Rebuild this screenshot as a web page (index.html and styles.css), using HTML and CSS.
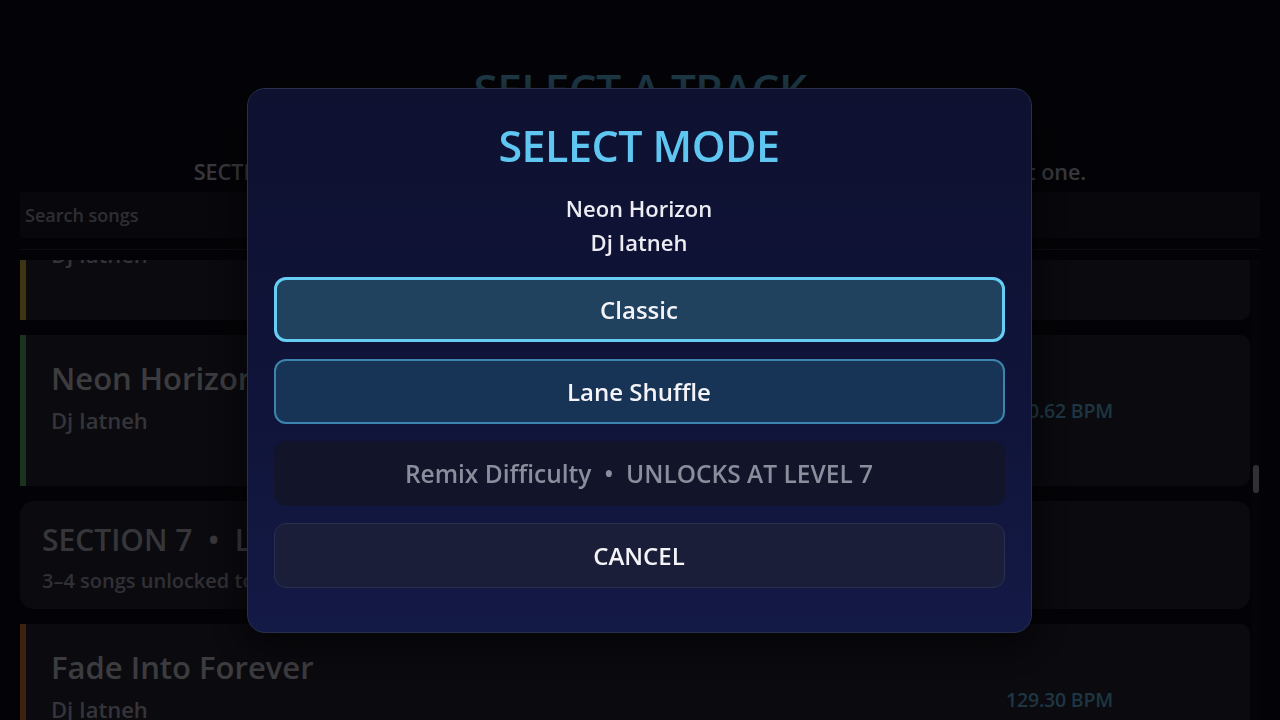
FILE: index.html
```html
<!DOCTYPE html>
<html lang="en">
<head>
    <meta charset="UTF-8">
    <meta name="viewport" content="width=device-width, initial-scale=1.0">
    <title>Select a Track</title>
    <link rel="stylesheet" href="styles.css">
</head>
<body>
    <div class="screen">
        <h1 class="page-title">SELECT A TRACK</h1>
        <p class="page-sub">SECTION 7 &bull; Clear every song in Section 6 with at least a B rank to unlock the next one.</p>

        <div class="search">
            <input type="text" placeholder="Search songs">
        </div>
        <div class="divider"></div>

        <div class="track-list">
            <div class="track stripe-yellow first">
                <div class="track-info">
                    <div class="track-title">Midnight Runner</div>
                    <div class="track-artist">Dj Iatneh</div>
                </div>
                <div class="track-bpm">124.00 BPM</div>
            </div>

            <div class="track stripe-green">
                <div class="track-info">
                    <div class="track-title">Neon Horizon</div>
                    <div class="track-artist">Dj Iatneh</div>
                </div>
                <div class="track-bpm">130.62 BPM</div>
            </div>

            <div class="section-card">
                <div class="section-title">SECTION 7 &nbsp;&bull;&nbsp; LEVEL 7</div>
                <div class="section-sub">3–4 songs unlocked to play in this section</div>
            </div>

            <div class="track stripe-orange">
                <div class="track-info">
                    <div class="track-title">Fade Into Forever</div>
                    <div class="track-artist">Dj Iatneh</div>
                </div>
                <div class="track-bpm">129.30 BPM</div>
            </div>

            <div class="scrollbar"><div class="thumb"></div></div>
        </div>
    </div>

    <div class="backdrop">
        <div class="modal">
            <h2 class="modal-title">SELECT MODE</h2>
            <div class="modal-song">Neon Horizon</div>
            <div class="modal-artist">Dj Iatneh</div>

            <div class="mode-list">
                <button class="mode-btn selected">Classic</button>
                <button class="mode-btn">Lane Shuffle</button>
                <button class="mode-btn locked" disabled>Remix Difficulty &nbsp;&bull;&nbsp; UNLOCKS AT LEVEL 7</button>
                <button class="mode-btn cancel">CANCEL</button>
            </div>
        </div>
    </div>
</body>
</html>
```

FILE: styles.css
```css
* { box-sizing: border-box; }

html, body {
    margin: 0;
    height: 100%;
    overflow: hidden;
}
body {
    font-family: "Open Sans", "Noto Sans", sans-serif;
    font-weight: 600;
    background-color: #0d0d1a;
    color: #d0d0dc;
}

.screen {
    padding: 0 20px;
    height: 100%;
    display: flex;
    flex-direction: column;
}

.page-title {
    margin: 63px 0 0;
    font-size: 44px;
    line-height: 53px;
    font-weight: 600;
    text-align: center;
    color: #64c4ee;
    letter-spacing: -0.5px;
}
.page-sub {
    margin: 41px 0 6px;
    font-size: 21.5px;
    line-height: 29px;
    text-align: center;
    color: #b8b8c8;
}

.search {
    flex-shrink: 0;
    height: 46px;
    background-color: #1a1a28;
    border-radius: 4px;
}
.search input {
    width: 100%;
    height: 100%;
    border: none;
    background: transparent;
    padding: 0 5px;
    font-family: inherit;
    font-weight: 600;
    font-size: 18px;
    color: #fff;
}
.search input::placeholder { color: #9a9aae; }

.divider {
    flex-shrink: 0;
    height: 1px;
    margin-top: 11px;
    background-color: #2a2a3e;
}

.track-list {
    position: relative;
    flex: 1;
    margin-top: 10px;
    overflow: hidden;
    padding-right: 10px;
    display: flex;
    flex-direction: column;
    gap: 15px;
}

.track {
    flex-shrink: 0;
    height: 151px;
    display: flex;
    align-items: flex-start;
    background-color: #222232;
    border-left: 6px solid;
    border-radius: 0 10px 10px 0;
    padding: 23px 137px 23px 25px;
}
.track.first { margin-top: -91px; }
.stripe-yellow { border-left-color: #c8ae3c; }
.stripe-green { border-left-color: #5aa864; }
.stripe-orange { border-left-color: #c87232; }

.track-info { flex: 1; }
.track-title {
    font-size: 31px;
    line-height: 40px;
    color: #c8c8d4;
}
.track-artist {
    margin-top: 7px;
    font-size: 22px;
    line-height: 30px;
    color: #aeaebe;
}
.track-bpm {
    align-self: center;
    font-size: 19.5px;
    letter-spacing: -0.2px;
    color: #64b4dc;
}

.section-card {
    flex-shrink: 0;
    height: 108px;
    background-color: #222232;
    border-radius: 14px;
    padding: 19px 22px 0;
}
.section-title {
    font-size: 30px;
    line-height: 40px;
    color: #b4b4c4;
}
.section-sub {
    margin-top: 7px;
    font-size: 20px;
    line-height: 28px;
    color: #a0a0b2;
}

.scrollbar {
    position: absolute;
    top: 0;
    right: 0;
    width: 8px;
    height: 100%;
    background-color: #121220;
}
.thumb {
    position: absolute;
    top: 205px;
    left: 1px;
    width: 6px;
    height: 28px;
    border-radius: 3px;
    background-color: #a4a4b0;
}

/* modal */
.backdrop {
    position: fixed;
    inset: 0;
    background-color: rgba(0, 0, 0, 0.7);
    display: flex;
    align-items: center;
    justify-content: center;
}
.modal {
    width: 785px;
    margin-right: 2px;
    padding: 32px 26px 44px;
    border-radius: 18px;
    border: 1px solid #2a2f4c;
    background: linear-gradient(180deg, #0e1130 0%, #10143a 60%, #141a46 100%);
    box-shadow: 0 10px 40px rgba(0,0,0,0.6);
    text-align: center;
}
.modal-title {
    margin: 0;
    font-size: 43px;
    line-height: 50px;
    font-weight: 600;
    color: #5ec6f0;
    letter-spacing: -0.5px;
}
.modal-song, .modal-artist {
    font-size: 22px;
    line-height: 34px;
    color: #ececf2;
}
.modal-song { margin-top: 20px; }

.mode-list {
    margin-top: 18px;
    display: flex;
    flex-direction: column;
    gap: 17px;
}
.mode-btn {
    height: 65px;
    width: 100%;
    border-radius: 12px;
    font-family: inherit;
    font-size: 24px;
    font-weight: 600;
    color: #f4f4f8;
    background-color: #173456;
    border: 2px solid #3b84ae;
    cursor: pointer;
}
.mode-btn.selected {
    background-color: #21425f;
    border: 3px solid #66cdf4;
}
.mode-btn.locked {
    font-size: 24.5px;
    background-color: #12152a;
    border: none;
    color: #898d9c;
    cursor: not-allowed;
}
.mode-btn.cancel {
    background-color: #1b1e38;
    border: 1px solid #2b2f4e;
}
```
